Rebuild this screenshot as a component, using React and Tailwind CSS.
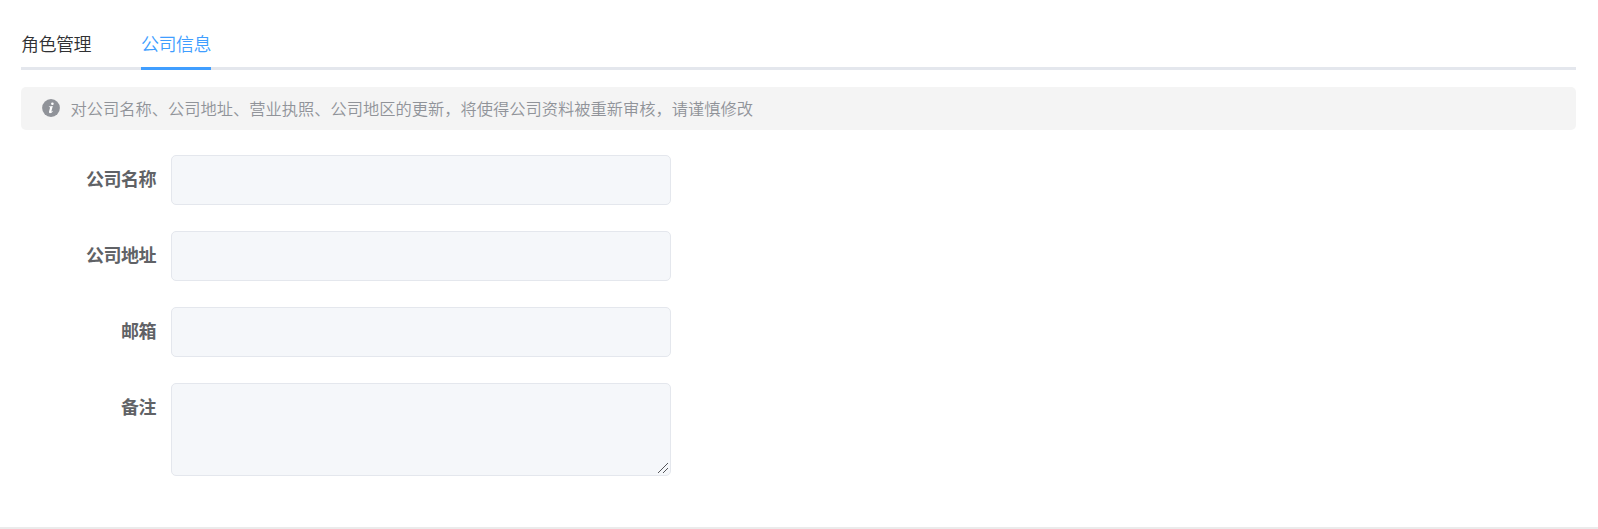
const FIELDS = ['公司名称', '公司地址', '邮箱'];

function Label({ children }) {
  return (
    <label className="w-[150px] shrink-0 pr-[15px] text-right text-[18px] leading-[46px] font-bold tracking-[-0.5px] text-[#606266]">
      {children}
    </label>
  );
}

function InfoIcon() {
  return (
    <svg width="18" height="18" viewBox="0 0 18 18" className="mb-px shrink-0">
      <circle cx="9" cy="9" r="8.9" fill="#909399" />
      <circle cx="10.4" cy="4.7" r="1.3" fill="#fff" />
      <path d="M6.9 7.6 10.8 7 9.4 12.3Q9.5 13 10.9 11.7L11.2 12Q9.6 14.2 8 14.2 6.7 14 7 12.7L8.1 8.6Q8 8 6.9 8.1Z" fill="#fff" />
    </svg>
  );
}

function ResizeGrip() {
  return (
    <svg
      width="10"
      height="10"
      viewBox="0 0 10 10"
      shapeRendering="crispEdges"
      className="pointer-events-none absolute right-[3px] bottom-[3px]"
    >
      {Array.from({ length: 10 }, (_, i) => (
        <rect key={i} x={i} y={9 - i} width="1" height="1" fill="#55565a" />
      ))}
      {Array.from({ length: 5 }, (_, i) => (
        <rect key={i} x={5 + i} y={9 - i} width="1" height="1" fill="#55565a" />
      ))}
    </svg>
  );
}

export default function App() {
  return (
    <main className="flex h-[529px] flex-col border-b-2 border-[#ebebeb] bg-white pt-5 pr-[22px] pl-[21px] font-['Noto_Sans_CJK_SC',sans-serif]">
      <nav className="flex h-[50px] shrink-0 gap-[50px] border-b-[3px] border-[#e4e7ed] text-[18px] font-[350] tracking-[-0.5px]">
        <button className="h-[50px] w-[70px] border-b-[3px] border-transparent text-left leading-[47px] whitespace-nowrap text-[#303133]">
          角色管理
        </button>
        <button className="h-[50px] w-[70px] border-b-[3px] border-[#409eff] text-left leading-[47px] whitespace-nowrap text-[#409eff]">
          公司信息
        </button>
      </nav>
      <div className="mt-[17px] flex h-[43px] shrink-0 items-center gap-[10.5px] rounded-[5px] bg-[#f4f4f4] px-[21px] text-[16.25px] font-[350] text-[#909399]">
        <InfoIcon />
        <span>对公司名称、公司地址、营业执照、公司地区的更新，将使得公司资料被重新审核，请谨慎修改</span>
      </div>
      <form className="mt-[25px] flex flex-col gap-[26px]">
        {FIELDS.map((name) => (
          <div key={name} className="flex h-[50px]">
            <Label>{name}</Label>
            <input
              disabled
              aria-label={name}
              className="h-[50px] w-[500px] rounded-[5px] border border-[#e4e7ed] bg-[#f5f7fa] px-[19px]"
            />
          </div>
        ))}
        <div className="flex h-[93px]">
          <Label>备注</Label>
          <div className="relative h-[93px] w-[500px]">
            <textarea
              disabled
              aria-label="备注"
              className="block h-full w-full resize-none rounded-[5px] border border-[#e4e7ed] bg-[#f5f7fa] px-[19px] py-1.5"
            />
            <ResizeGrip />
          </div>
        </div>
      </form>
    </main>
  );
}
